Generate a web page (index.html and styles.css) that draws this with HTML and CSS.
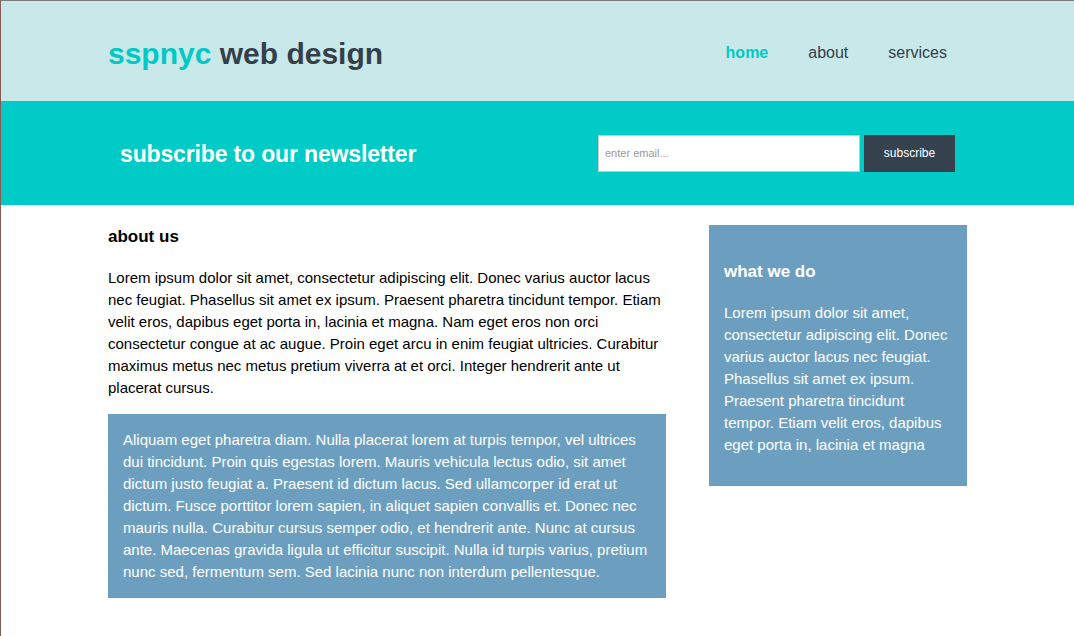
FILE: index.html
```html
<!DOCTYPE html>
<html>
<head>
<meta charset="utf-8">
<title>sspnyc web design</title>
<link rel="stylesheet" href="styles.css">
</head>
<body>
<header class="site-header">
  <div class="container header-inner">
    <h1 class="logo"><span class="logo-accent">sspnyc</span> web design</h1>
    <nav class="nav">
      <a class="nav-link active" href="#">home</a>
      <a class="nav-link" href="#">about</a>
      <a class="nav-link" href="#">services</a>
    </nav>
  </div>
</header>
<section class="newsletter">
  <div class="container newsletter-inner">
    <h2 class="newsletter-title">subscribe to our newsletter</h2>
    <form class="newsletter-form">
      <input class="email-input" type="email" placeholder="enter email...">
      <button class="subscribe-btn" type="button">subscribe</button>
    </form>
  </div>
</section>
<main class="container main">
  <article class="content">
    <h3 class="section-title">about us</h3>
    <p class="text">Lorem ipsum dolor sit amet, consectetur adipiscing elit. Donec varius auctor lacus nec feugiat. Phasellus sit amet ex ipsum. Praesent pharetra tincidunt tempor. Etiam velit eros, dapibus eget porta in, lacinia et magna. Nam eget eros non orci consectetur congue at ac augue. Proin eget arcu in enim feugiat ultricies. Curabitur maximus metus nec metus pretium viverra at et orci. Integer hendrerit ante ut placerat cursus.</p>
    <div class="highlight">
      <p class="text">Aliquam eget pharetra diam. Nulla placerat lorem at turpis tempor, vel ultrices dui tincidunt. Proin quis egestas lorem. Mauris vehicula lectus odio, sit amet dictum justo feugiat a. Praesent id dictum lacus. Sed ullamcorper id erat ut dictum. Fusce porttitor lorem sapien, in aliquet sapien convallis et. Donec nec mauris nulla. Curabitur cursus semper odio, et hendrerit ante. Nunc at cursus ante. Maecenas gravida ligula ut efficitur suscipit. Nulla id turpis varius, pretium nunc sed, fermentum sem. Sed lacinia nunc non interdum pellentesque.</p>
    </div>
  </article>
  <aside class="sidebar">
    <h3 class="sidebar-title">what we do</h3>
    <p class="text">Lorem ipsum dolor sit amet, consectetur adipiscing elit. Donec varius auctor lacus nec feugiat. Phasellus sit amet ex ipsum. Praesent pharetra tincidunt tempor. Etiam velit eros, dapibus eget porta in, lacinia et magna</p>
  </aside>
</main>
</body>
</html>
```

FILE: styles.css
```css
* { box-sizing: border-box; }

html, body {
  margin: 0;
  padding: 0;
}

body {
  font-family: "Liberation Sans", Arial, Helvetica, sans-serif;
  color: #000;
  background: #fff;
  border-top: 1px solid #7a7a7a;
  border-left: 1px solid #8a5a55;
  min-height: 636px;
}

.container {
  width: 859px;
  margin: 0 auto;
}

.site-header {
  background: #c9e8ea;
  height: 100px;
}

.header-inner {
  height: 100%;
  display: flex;
  align-items: center;
  justify-content: space-between;
}

.logo {
  margin: 0;
  font-size: 30px;
  font-weight: bold;
  color: #353f4a;
  padding-top: 6px;
}

.logo-accent { color: #00c9c5; }

.nav {
  display: flex;
  padding-top: 4px;
}

.nav-link {
  padding: 0 20px;
  font-size: 16px;
  color: #353f4a;
  text-decoration: none;
}

.nav-link.active {
  color: #00c9c5;
  font-weight: bold;
}

.newsletter {
  background: #00cbc6;
  height: 104px;
}

.newsletter-inner {
  height: 100%;
  display: flex;
  align-items: center;
  justify-content: space-between;
  padding: 0 12px 0 12px;
}

.newsletter-title {
  margin: 0;
  color: #fff;
  font-size: 23px;
  font-weight: bold;
  letter-spacing: -0.15px;
  padding-top: 2px;
}

.newsletter-form {
  display: flex;
  gap: 4px;
}

.email-input {
  width: 262px;
  height: 37px;
  border: 1px solid #c8c8c8;
  padding: 0 6px;
  font-family: "Liberation Sans", Arial, sans-serif;
  font-size: 11px;
  color: #333;
  background: #fff;
  outline: none;
}

.email-input::placeholder { color: #9a9a9a; }

.subscribe-btn {
  width: 91px;
  height: 37px;
  border: none;
  background: #36434f;
  color: #fff;
  font-family: "Liberation Sans", Arial, sans-serif;
  font-size: 12px;
}

.main {
  display: flex;
  justify-content: space-between;
  align-items: flex-start;
  padding-top: 20px;
}

.content { width: 558px; }

.section-title {
  margin: 2px 0 20px;
  font-size: 17px;
  font-weight: bold;
  line-height: 20px;
}

.text {
  margin: 0;
  font-size: 15px;
  line-height: 22px;
}

.highlight {
  margin-top: 15px;
  background: #6c9fbf;
  padding: 15px;
  color: #fff;
}

.sidebar {
  width: 258px;
  background: #6c9fbf;
  color: #fff;
  padding: 37px 15px 30px;
}

.sidebar-title {
  margin: 0 0 20px;
  font-size: 17px;
  font-weight: bold;
  line-height: 20px;
}
```
